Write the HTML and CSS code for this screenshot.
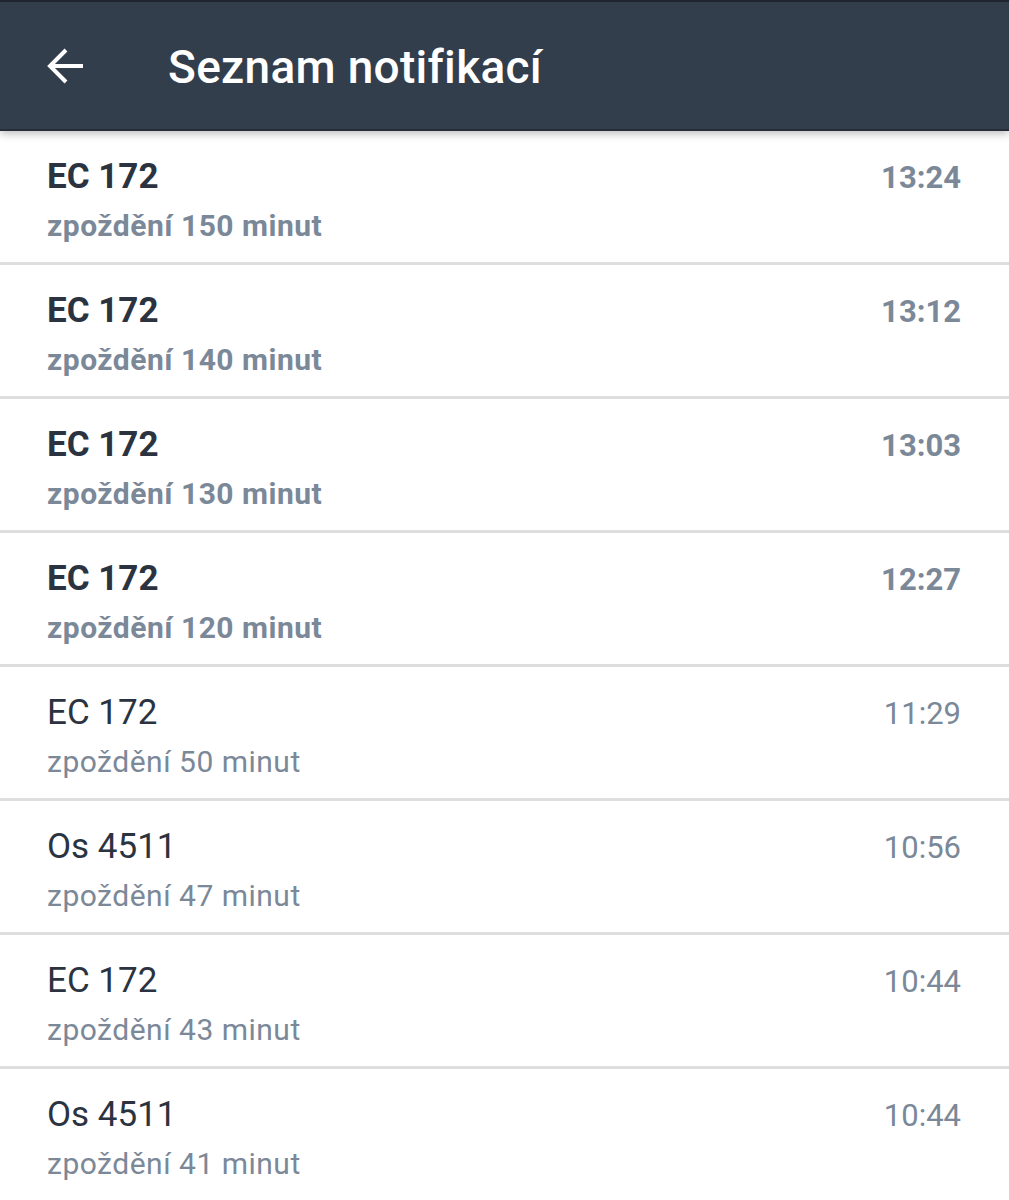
FILE: index.html
```html
<!DOCTYPE html>
<html lang="cs">
<head>
    <meta charset="UTF-8">
    <title>Seznam notifikací</title>
    <link rel="stylesheet" href="styles.css">
</head>
<body>
<div class="toolbar">
    <span class="back">
        <svg width="38" height="38" viewBox="0 0 38 38">
            <path d="M36 19H4M19 3L3 19l16 16" fill="none" stroke="#fff" stroke-width="4"/>
        </svg>
    </span>
    <h1>Seznam notifikací</h1>
</div>
<ul class="list">
    <li class="unread">
        <div class="text">
            <div class="train">EC 172</div>
            <div class="msg">zpoždění 150 minut</div>
        </div>
        <div class="time">13:24</div>
    </li>
    <li class="unread">
        <div class="text">
            <div class="train">EC 172</div>
            <div class="msg">zpoždění 140 minut</div>
        </div>
        <div class="time">13:12</div>
    </li>
    <li class="unread">
        <div class="text">
            <div class="train">EC 172</div>
            <div class="msg">zpoždění 130 minut</div>
        </div>
        <div class="time">13:03</div>
    </li>
    <li class="unread">
        <div class="text">
            <div class="train">EC 172</div>
            <div class="msg">zpoždění 120 minut</div>
        </div>
        <div class="time">12:27</div>
    </li>
    <li>
        <div class="text">
            <div class="train">EC 172</div>
            <div class="msg">zpoždění 50 minut</div>
        </div>
        <div class="time">11:29</div>
    </li>
    <li>
        <div class="text">
            <div class="train">Os 4511</div>
            <div class="msg">zpoždění 47 minut</div>
        </div>
        <div class="time">10:56</div>
    </li>
    <li>
        <div class="text">
            <div class="train">EC 172</div>
            <div class="msg">zpoždění 43 minut</div>
        </div>
        <div class="time">10:44</div>
    </li>
    <li>
        <div class="text">
            <div class="train">Os 4511</div>
            <div class="msg">zpoždění 41 minut</div>
        </div>
        <div class="time">10:44</div>
    </li>
</ul>
</body>
</html>
```

FILE: styles.css
```css
* {
    margin: 0;
    padding: 0
}

ul {
    list-style: none
}

body {
    background: #fff;
    font-family: Roboto, "Noto Sans", sans-serif;
    color: #2b3340;
}

.toolbar {
    height: 127px;
    background: #333e4d;
    border-top: 2px solid #1e2530;
    border-bottom: 2px solid #262e3a;
    display: flex;
    align-items: center;
    padding-left: 47px;
    box-shadow: 0 3px 8px rgba(0, 0, 0, 0.25);
    position: relative;
}

.back {
    width: 38px;
    height: 38px;
    margin-right: 83px;
}

.back svg {
    display: block;
}

.toolbar h1 {
    color: #fff;
    font-size: 46px;
    font-weight: 500;
    letter-spacing: 0.3px;
    line-height: 52px;
    margin-top: 2px;
}

.list li {
    display: flex;
    justify-content: space-between;
    padding: 22px 48px 0 47px;
    border-bottom: 3px solid #dedede;
    height: 109px;
}

.train {
    font-size: 35px;
    line-height: 48px;
}

.msg {
    font-size: 30px;
    letter-spacing: 0.5px;
    line-height: 40px;
    margin-top: 5px;
    color: #7b8898;
}

.time {
    font-size: 31px;
    line-height: 48px;
    padding-top: 1px;
    color: #7b8898;
}

.unread .train,
.unread .msg,
.unread .time {
    font-weight: 700;
}
```
